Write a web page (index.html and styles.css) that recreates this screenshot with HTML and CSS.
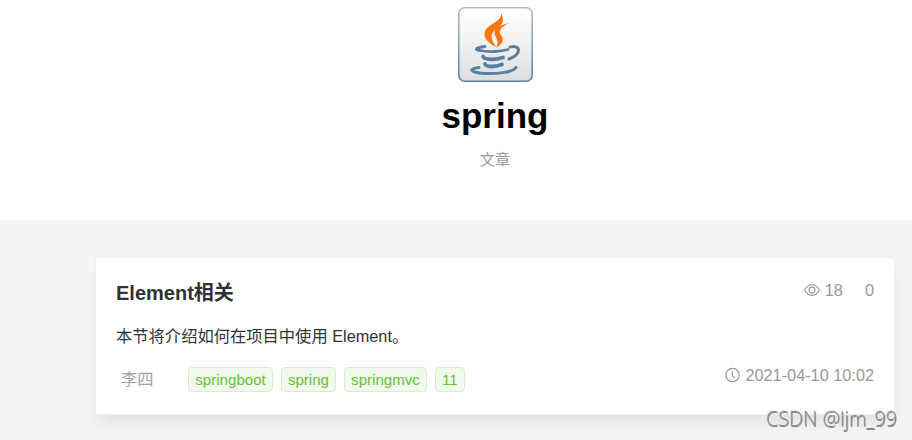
FILE: index.html
```html
<!DOCTYPE html>
<html lang="zh-CN">
<head>
<meta charset="utf-8">
<title>spring</title>
<link rel="stylesheet" href="styles.css">
</head>
<body>
<header class="hero">
  <svg class="logo" viewBox="0 0 75 75">
    <defs>
      <linearGradient id="tile" x1="0" y1="0" x2="0" y2="1">
        <stop offset="0" stop-color="#fff"/><stop offset=".5" stop-color="#f1f1f2"/><stop offset="1" stop-color="#dcdddf"/>
      </linearGradient>
      <linearGradient id="edge" x1="0" y1="0" x2="0" y2="1">
        <stop offset="0" stop-color="#a9c0d0"/><stop offset="1" stop-color="#6085a0"/>
      </linearGradient>
    </defs>
    <rect x=".8" y=".8" width="73.4" height="73.4" rx="6" fill="url(#tile)" stroke="url(#edge)" stroke-width="1.6"/>
    <path fill="#f87614" d="M43 6C48 15 43 19 36 24C32 28 33 32 38 40C25 33 24 26 30 20C37 15 44 12 43 6Z"/>
    <path fill="#f87614" d="M51 16C41 18 35 23 37 28C39 33 41 35 38 41C46 36 46 32 43 28C40 24 43 20 51 16Z"/>
    <g fill="none" stroke="#587f9f" stroke-linecap="round">
      <path stroke-width="2.800" d="M27 39.500C17 41 16 42.500 22 43.500C31 45.500 43 44.500 50 42.500"/>
      <path stroke-width="3.800" d="M25 49.500C26 52.500 36 53.500 45 50.500"/>
      <path stroke-width="3.800" d="M27 57C28 60 36 60.500 44 57.500"/>
      <path stroke-width="3" d="M52 40C63 37.500 64 47 51 52"/>
      <path stroke-width="3" d="M21 60.500C10 62 12 65.500 26 66.500C41 67 55 65 58 60.500"/>
    </g>
  </svg>
  <h1>spring</h1>
  <p>文章</p>
</header>
<main>
  <article class="card">
    <div class="row">
      <h2>Element相关</h2>
      <div class="meta stats">
        <svg class="icon" viewBox="0 0 16 16"><path d="M.6 8Q3.300 2.700 8 2.700T15.400 8Q12.700 13.300 8 13.300T.6 8Z"/><circle cx="8" cy="8" r="2.900"/></svg>
        <span>18</span><span class="comments">0</span>
      </div>
    </div>
    <p class="summary">本节将介绍如何在项目中使用 Element。</p>
    <div class="row footer">
      <span class="author">李四</span>
      <div class="tags"><span>springboot</span><span>spring</span><span>springmvc</span><span>11</span></div>
      <div class="meta date">
        <svg class="icon" viewBox="0 0 16 16"><circle cx="8.500" cy="8" r="6.700"/><path d="M8.300 4V8.500L10.500 11"/></svg>
        <time>2021-04-10 10:02</time>
      </div>
    </div>
  </article>
</main>
<div class="watermark">CSDN @ljm_99</div>
</body>
</html>
```
FILE: styles.css
```css
* { box-sizing: border-box; }
body {
  margin: 0;
  height: 440px;
  overflow: hidden;
  background: #f4f4f4;
  color: #303133;
  font: 16.3px/24px "Liberation Sans", "Noto Sans CJK SC", sans-serif;
}
h1, h2, p { margin: 0; }
.hero {
  height: 220px;
  padding: 7px 0 0 78px;
  background: #fff;
  display: flex;
  flex-direction: column;
  align-items: center;
}
.logo { width: 75px; height: 75px; }
h1 { margin-top: 14px; font-size: 35px; line-height: 40px; color: #000; }
.hero p { margin-top: 12px; font-size: 15.3px; color: #9b9b9b; }
main { padding: 37px 17px 0 95px; }
.card {
  height: 158px;
  padding: 20px;
  background: #fff;
  border: 1px solid #ebeef5;
  box-shadow: 0 12px 12px -4px rgba(0, 0, 0, .07);
}
.row { display: flex; }
h2 { font-size: 20px; line-height: 30px; }
.meta { margin-left: auto; display: flex; align-items: center; color: #999; height: 24px; }
.icon { width: 16px; height: 16px; margin-right: 5px; fill: none; stroke: #999; stroke-width: 1.15; }
.comments { margin-left: 22px; }
.summary { margin-top: 16px; height: 24px; line-height: 24px; }
.footer { margin-top: 19px; }
.author { width: 67px; margin-left: 5px; line-height: 24px; color: #a2a2a2; }
.tags { display: flex; gap: 7.5px; }
.tags span {
  height: 25px;
  padding: 0 6.3px;
  border: 1px solid #d5efc8;
  border-radius: 4px;
  background: #f0f9eb;
  color: #67c23a;
  font-size: 15.1px;
  line-height: 24px;
}
.date { margin-top: -4px; }
.watermark {
  position: absolute;
  left: 766px;
  top: 406px;
  font: 300 19.8px/26px "Open Sans", "Noto Sans", sans-serif;
  color: #888;
  text-shadow: -1px -1px 0 #eee, .5px .5px 0 #888;
  white-space: nowrap;
}
```
